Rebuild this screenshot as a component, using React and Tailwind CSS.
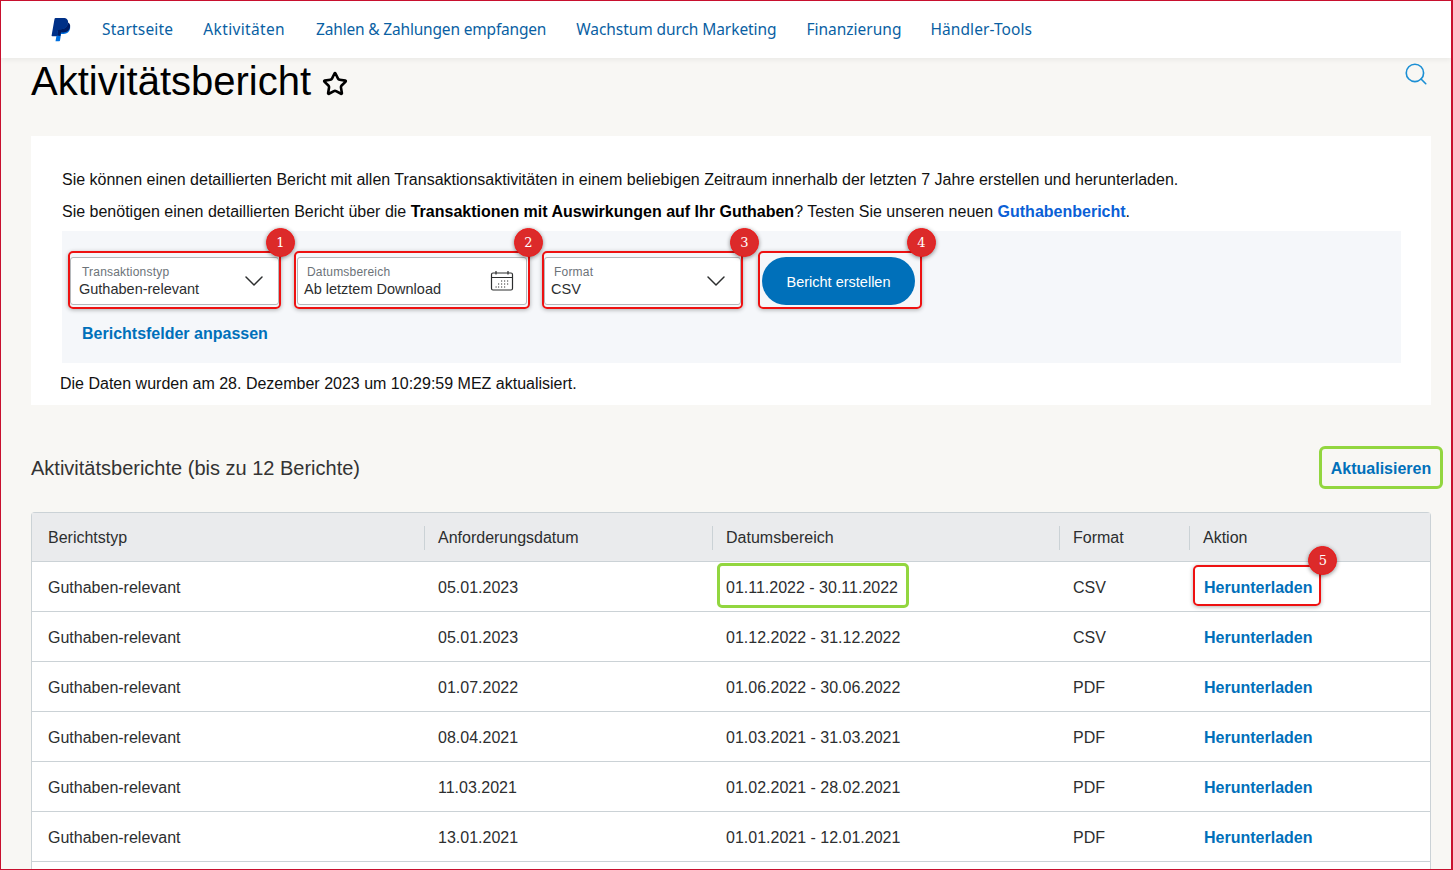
import { ChevronDown, Search, Star } from 'lucide-react';

const navItems = [
  { label: 'Startseite', cls: 'tracking-[0.2px]' },
  { label: 'Aktivitäten', cls: 'tracking-[0.35px]' },
  { label: 'Zahlen & Zahlungen empfangen', cls: 'ml-px tracking-[-0.18px]' },
  { label: 'Wachstum durch Marketing', cls: 'tracking-[-0.08px]' },
  { label: 'Finanzierung', cls: '' },
  { label: 'Händler-Tools', cls: '-ml-px tracking-[0.08px]' },
];

const rows = [
  { type: 'Guthaben-relevant', requested: '05.01.2023', range: '01.11.2022 - 30.11.2022', format: 'CSV' },
  { type: 'Guthaben-relevant', requested: '05.01.2023', range: '01.12.2022 - 31.12.2022', format: 'CSV' },
  { type: 'Guthaben-relevant', requested: '01.07.2022', range: '01.06.2022 - 30.06.2022', format: 'PDF' },
  { type: 'Guthaben-relevant', requested: '08.04.2021', range: '01.03.2021 - 31.03.2021', format: 'PDF' },
  { type: 'Guthaben-relevant', requested: '11.03.2021', range: '01.02.2021 - 28.02.2021', format: 'PDF' },
  { type: 'Guthaben-relevant', requested: '13.01.2021', range: '01.01.2021 - 12.01.2021', format: 'PDF' },
];

function PayPalLogo() {
  return (
    <svg width="20" height="24" viewBox="0 0 20 24">
      <path d="M7.500 6H15c3 0 4.600 1.800 4.100 4.600-.6 3.400-3 5.400-6.400 5.400H10l-1 6.500c-.1.500-.3.700-.8.700H4.500z" fill="#0070e0" />
      <path d="M4.600 0h7.700c3.600 0 5.300 2 4.700 5.300-.7 3.800-3.200 5.900-7 5.900H7.200l-1.100 6.300c-.1.500-.3.700-.8.700H1.200c-.5 0-.7-.3-.6-.8L3.500 1c.1-.6.500-1 1.100-1z" fill="#003087" />
      <path d="M6.100 17.500 7.200 11.200H10c3.800 0 6.300-2.100 7-5.900q.1-.4.100-.8c1.500.8 2.400 2.400 2 4.600-.6 3.400-3 5.400-6.400 5.400H10l-.6 3.500z" fill="#001c64" />
    </svg>
  );
}

function CalendarIcon() {
  return (
    <svg width="24" height="22" viewBox="0 0 24 22" fill="none" stroke="#2c2e2f" strokeWidth="1.200">
      <rect x="1.500" y="3" width="21" height="17" rx="1.500" />
      <path d="M1.500 7.500h21M6 1v3.500M18 1v3.500" />
      <path d="M11 11h1.200M14 11h1.200M17 11h1.200M8 14h1.200M11 14h1.200M14 14h1.200M17 14h1.200M5.500 17h1.200M8 17h1.200M11 17h1.200M14 17h1.200" strokeWidth="1" />
    </svg>
  );
}

function Badge({ n, className }) {
  return (
    <span className={`absolute z-10 flex h-[29px] w-[29px] items-center justify-center rounded-full border border-[#f01a1a] bg-[#dc2a2a] font-['DejaVu_Serif',serif] text-[13px] font-normal text-white shadow-[0_1px_4px_rgba(0,0,0,0.45)] ${className}`}>
      {n}
    </span>
  );
}

function Field({ label, value, labelLeft, valueLeft, width, icon }) {
  return (
    <div className={`relative h-[48px] rounded-[3px] border border-[#b5b8bb] bg-white ${width}`}>
      <span className={`absolute top-[6px] text-xs leading-4 tracking-[0.2px] text-[#6c7378] ${labelLeft}`}>{label}</span>
      <span className={`absolute top-[21px] text-[14.500px] leading-5 text-[#2c2e2f] ${valueLeft}`}>{value}</span>
      <span className="absolute top-[11px] right-[12px] flex h-6 w-6 items-center justify-center">{icon}</span>
    </div>
  );
}

const redBox = 'pointer-events-none absolute z-[5] rounded-[5px] border-2 border-[#ee1111] shadow-[0_1px_4px_rgba(0,0,0,0.3)]';

export default function App() {
  const chevron = <ChevronDown className="h-8 w-8 shrink-0 text-[#2c2e2f]" strokeWidth={1.100} />;

  return (
    <div className="flex h-[870px] flex-col overflow-hidden border-t border-r-2 border-b border-l border-[#c8102e] bg-[#f8f7f4] font-['Liberation_Sans',sans-serif]">
      <header className="relative z-10 flex h-[57px] shrink-0 items-center bg-white pl-[50px] shadow-[0_2px_5px_rgba(0,0,0,0.06)]">
        <PayPalLogo />
        <nav className="ml-[31px] flex gap-[30px] font-['Noto_Sans',sans-serif] text-[15.500px] text-[#0a5fa3]">
          {navItems.map(item => <a key={item.label} href="#" className={item.cls}>{item.label}</a>)}
        </nav>
      </header>

      <main className="flex min-h-0 flex-1 flex-col pr-[20px] pl-[30px]">
        <div className="flex h-[78px] shrink-0 justify-between">
          <h1 className="flex h-[46px] items-center text-[40px] text-black">
            Aktivitätsbericht
            <Star className="mt-[6px] ml-[11px] h-[26px] w-[26px] text-black" strokeWidth={2.400} />
          </h1>
          <Search className="mt-[3px] mr-[2px] h-[26px] w-[26px] text-[#1c8fd4]" strokeWidth={1.500} />
        </div>

        <section className="h-[269px] shrink-0 bg-white pt-[34px] text-[#111]">
          <p className="ml-[31px] text-base leading-5">
            Sie können einen detaillierten Bericht mit allen Transaktionsaktivitäten in einem beliebigen Zeitraum innerhalb der letzten 7 Jahre erstellen und herunterladen.
          </p>
          <p className="mt-3 ml-[31px] text-base leading-5">
            Sie benötigen einen detaillierten Bericht über die <b className="text-black">Transaktionen mit Auswirkungen auf Ihr Guthaben</b>? Testen Sie unseren neuen <a href="#" className="font-bold text-[#0b5fd6]">Guthabenbericht</a>.
          </p>

          <div className="mt-[9px] mr-[30px] ml-[31px] h-[132px] bg-[#f5f7fa]">
            <div className="flex items-start pt-[26px] pl-2">
              <div className="relative">
                <span className={`${redBox} -top-[6px] -right-[2px] -bottom-[4px] -left-[2px]`} />
                <Badge n="1" className="-top-[29px] -right-[16px]" />
                <Field label="Transaktionstyp" value="Guthaben-relevant" labelLeft="left-[11px]" valueLeft="left-2" width="w-[209px]" icon={chevron} />
              </div>
              <div className="relative ml-[18px]">
                <span className={`${redBox} -top-[6px] -right-[3px] -bottom-[4px] -left-[3px]`} />
                <Badge n="2" className="-top-[29px] -right-[16px]" />
                <Field label="Datumsbereich" value="Ab letztem Download" labelLeft="left-[9px]" valueLeft="left-[6px]" width="w-[230px]" icon={<CalendarIcon />} />
              </div>
              <div className="relative ml-[17px]">
                <span className={`${redBox} -top-[6px] -right-[2px] -bottom-[4px] -left-[2px]`} />
                <Badge n="3" className="-top-[29px] -right-[18px]" />
                <Field label="Format" value="CSV" labelLeft="left-[9px]" valueLeft="left-[6px]" width="w-[197px]" icon={chevron} />
              </div>
              <div className="relative ml-[21px]">
                <span className={`${redBox} -top-[6px] -right-[7px] -bottom-[4px] -left-[4px]`} />
                <Badge n="4" className="-top-[29px] -right-[21px]" />
                <button className="h-[48px] w-[153px] rounded-full bg-[#0070ba] pt-1 text-[14.500px] text-white">Bericht erstellen</button>
              </div>
            </div>
            <a href="#" className="mt-[19px] ml-[20px] block text-base leading-5 font-bold text-[#0070ba]">Berichtsfelder anpassen</a>
          </div>
          <p className="mt-[11px] ml-[29px] text-base leading-5">Die Daten wurden am 28. Dezember 2023 um 10:29:59 MEZ aktualisiert.</p>
        </section>

        <div className="flex h-[107px] shrink-0 items-start justify-between">
          <h2 className="mt-[51px] text-xl leading-6 text-[#333]">Aktivitätsberichte (bis zu 12 Berichte)</h2>
          <a href="#" className="mt-[41px] -mr-[12px] flex h-[43px] w-[124px] items-center justify-center rounded-[6px] border-[3px] border-[#92d63f] pt-[3px] text-base font-bold text-[#0070ba]">Aktualisieren</a>
        </div>

        <div className="min-h-0 flex-1 rounded-t-[4px] border-x border-t border-[#cbd2d6] bg-white">
          <table className="w-full table-fixed border-collapse text-base text-[#2c2e2f]">
            <colgroup>
              <col className="w-[392px]" />
              <col className="w-[288px]" />
              <col className="w-[347px]" />
              <col className="w-[130px]" />
              <col />
            </colgroup>
            <thead className="bg-[#eaebed]">
              <tr className="h-[48px] border-b border-[#cbd2d6] text-left">
                <th className="pt-[2px] pl-4 font-normal">Berichtstyp</th>
                {['Anforderungsdatum', 'Datumsbereich', 'Format', 'Aktion'].map(h => (
                  <th key={h} className="p-0 pt-[2px] font-normal">
                    <span className="block h-6 border-l border-[#cbd2d6] pl-[13px] leading-6">{h}</span>
                  </th>
                ))}
              </tr>
            </thead>
            <tbody>
              {rows.map((r, i) => (
                <tr key={i} className="h-[50px] border-b border-[#cbd2d6]">
                  <td className="pt-1 pl-4">{r.type}</td>
                  <td className="pt-1 pl-[14px]">{r.requested}</td>
                  <td className="pt-1 pl-[14px]">
                    <span className="relative">
                      {i === 0 && <span className="absolute -top-[16px] -right-[11px] -bottom-[12px] -left-[9px] rounded-[5px] border-[3px] border-[#92d63f]" />}
                      {r.range}
                    </span>
                  </td>
                  <td className="pt-1 pl-[14px]">{r.format}</td>
                  <td className="pt-1 pl-[15px]">
                    <a href="#" className="relative font-bold text-[#0070ba]">
                      {i === 0 && <span className="absolute -top-[14px] -right-[9px] -bottom-[10px] -left-[11px] rounded-[5px] border-2 border-[#ee1111] shadow-[0_1px_4px_rgba(0,0,0,0.3)]" />}
                      {i === 0 && <Badge n="5" className="-top-[33px] -right-[25px]" />}
                      Herunterladen
                    </a>
                  </td>
                </tr>
              ))}
            </tbody>
          </table>
        </div>
      </main>
    </div>
  );
}
